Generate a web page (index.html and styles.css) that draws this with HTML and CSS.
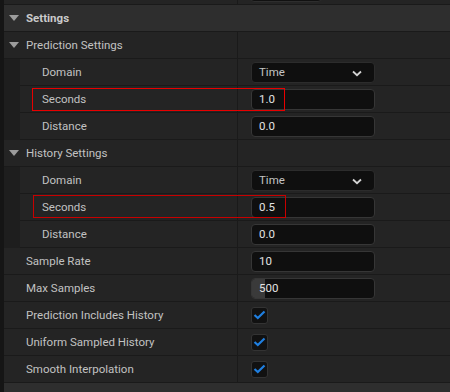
FILE: index.html
```html
<!DOCTYPE html>
<html lang="en">
<head>
  <meta charset="UTF-8">
  <title>Details</title>
  <link rel="stylesheet" href="styles.css">
</head>
<body>
  <div class="panel">
    <div class="row top">
      <div class="name"></div>
      <div class="value"><div class="stub"></div></div>
    </div>

    <div class="category">
      <span class="arrow"></span>Settings
    </div>

    <!-- Prediction -->
    <div class="row">
      <div class="name"><span class="arrow"></span>Prediction Settings</div>
      <div class="value"></div>
    </div>
    <div class="row child">
      <div class="name">Domain</div>
      <div class="value">
        <div class="field combo">Time
          <svg class="chevron" width="10" height="7" viewBox="0 0 10 7"><path d="M1 1.5 L5 5.2 L9 1.5" fill="none" stroke="#d4d4d4" stroke-width="1.8"/></svg>
        </div>
      </div>
    </div>
    <div class="row child">
      <div class="name">Seconds</div>
      <div class="value"><div class="field num">1.0</div></div>
      <div class="mark"></div>
    </div>
    <div class="row child">
      <div class="name">Distance</div>
      <div class="value"><div class="field num">0.0</div></div>
    </div>

    <!-- History -->
    <div class="row">
      <div class="name"><span class="arrow"></span>History Settings</div>
      <div class="value"></div>
    </div>
    <div class="row child">
      <div class="name">Domain</div>
      <div class="value">
        <div class="field combo">Time
          <svg class="chevron" width="10" height="7" viewBox="0 0 10 7"><path d="M1 1.5 L5 5.2 L9 1.5" fill="none" stroke="#d4d4d4" stroke-width="1.8"/></svg>
        </div>
      </div>
    </div>
    <div class="row child">
      <div class="name">Seconds</div>
      <div class="value"><div class="field num">0.5</div></div>
      <div class="mark dim"></div>
    </div>
    <div class="row child">
      <div class="name">Distance</div>
      <div class="value"><div class="field num">0.0</div></div>
    </div>

    <div class="row">
      <div class="name">Sample Rate</div>
      <div class="value"><div class="field num">10</div></div>
    </div>
    <div class="row">
      <div class="name">Max Samples</div>
      <div class="value"><div class="field num slider"><span class="fill"></span>500</div></div>
    </div>
    <div class="row">
      <div class="name">Prediction Includes History</div>
      <div class="value"><div class="check"><svg width="13" height="10" viewBox="0 0 13 10"><path d="M1.5 5 L4.8 8 L11.5 1.5" fill="none" stroke="#1f7fe0" stroke-width="2.2"/></svg></div></div>
    </div>
    <div class="row">
      <div class="name">Uniform Sampled History</div>
      <div class="value"><div class="check"><svg width="13" height="10" viewBox="0 0 13 10"><path d="M1.5 5 L4.8 8 L11.5 1.5" fill="none" stroke="#1f7fe0" stroke-width="2.2"/></svg></div></div>
    </div>
    <div class="row">
      <div class="name">Smooth Interpolation</div>
      <div class="value"><div class="check"><svg width="13" height="10" viewBox="0 0 13 10"><path d="M1.5 5 L4.8 8 L11.5 1.5" fill="none" stroke="#1f7fe0" stroke-width="2.2"/></svg></div></div>
    </div>

    <div class="category">
      <span class="arrow"></span>Debug
    </div>
  </div>
</body>
</html>
```

FILE: styles.css
```css
body {
  margin: 0;
  padding: 0;
  background-color: #151515;
  font-family: 'Roboto', 'Liberation Sans', sans-serif;
  font-size: 11.5px;
  color: #c2c2c2;
  overflow: hidden;
}

.panel {
  width: 450px;
  height: 392px;
  overflow: hidden;
}

.row {
  position: relative;
  display: flex;
  height: 26px;
  margin-left: 4px;
  background-color: #242424;
  border-bottom: 1px solid #1a1a1a;
}

.row.top {
  margin-top: -22px;
}

.row.child {
  margin-left: 20px;
  box-shadow: -16px 0 0 #1e1e1e;
}

.name {
  flex: 1;
  display: flex;
  align-items: center;
  padding-left: 22px;
  padding-bottom: 1px;
  white-space: nowrap;
}

.name .arrow {
  margin-left: -17px;
  margin-right: 7px;
}

.value {
  width: 213px;
  box-sizing: border-box;
  border-left: 1px solid #1a1a1a;
  padding-left: 13px;
  display: flex;
  align-items: center;
}

.category {
  display: flex;
  align-items: center;
  height: 25px;
  padding-bottom: 1px;
  margin-left: 4px;
  padding-left: 5px;
  background-color: #2e2e2e;
  border-bottom: 1px solid #1a1a1a;
  font-weight: bold;
  color: #cacaca;
}

.category .arrow {
  margin-right: 7px;
}

.arrow {
  display: inline-block;
  width: 0;
  height: 0;
  border-left: 5px solid transparent;
  border-right: 5px solid transparent;
  border-top: 6px solid #9c9c9c;
}

.field {
  position: relative;
  width: 124px;
  height: 21px;
  box-sizing: border-box;
  background-color: #0f0f0f;
  border: 1px solid #363636;
  border-radius: 4px;
  display: flex;
  align-items: center;
  padding-left: 7px;
  color: #e2e2e2;
  z-index: 0;
}

.combo {
  border-color: #2c2c2c;
  color: #c4c4c4;
}

.chevron {
  position: absolute;
  right: 12px;
  top: 7px;
}

.stub {
  width: 72px;
  height: 22px;
  margin-left: -1px;
  box-sizing: border-box;
  background-color: #111;
  border: 1px solid #2e2e2e;
  border-radius: 4px;
}

.slider .fill {
  position: absolute;
  left: 0;
  top: 0;
  bottom: 0;
  width: 13px;
  background-color: #3a3a3a;
  border-radius: 3px 0 0 3px;
  z-index: -1;
}

.check {
  width: 17px;
  height: 17px;
  box-sizing: border-box;
  background-color: #111;
  border: 1px solid #333;
  border-radius: 3px;
  display: flex;
  align-items: center;
  justify-content: center;
}

/* highlight boxes drawn over the rows */
.mark {
  position: absolute;
  left: 12px;
  top: 2px;
  width: 253px;
  height: 23px;
  box-sizing: border-box;
  border: 1px solid #e80000;
  pointer-events: none;
  z-index: 5;
}

.mark.dim {
  left: 13px;
  top: 1px;
  border-color: #c80000;
}
```
